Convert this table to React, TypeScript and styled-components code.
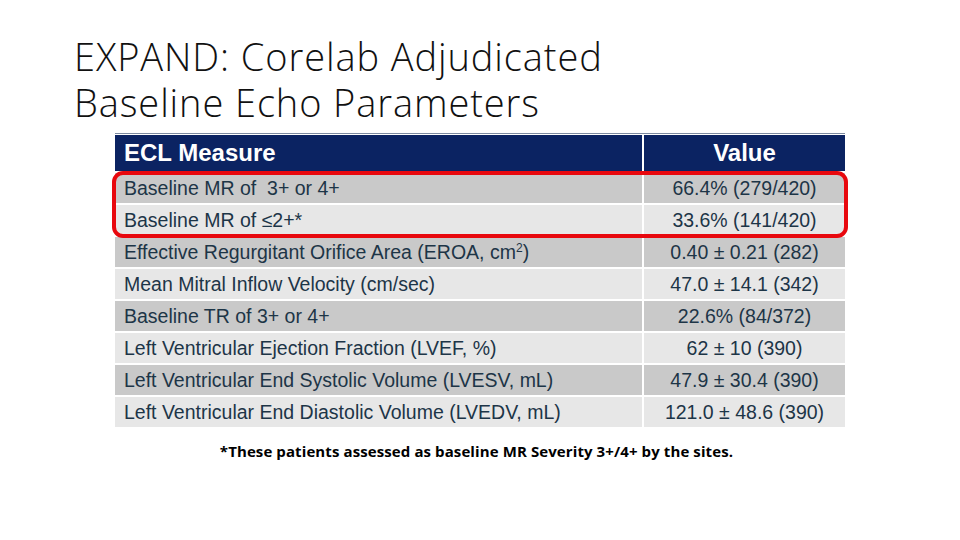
import React from "react"
import styled, { createGlobalStyle } from "styled-components"

const GlobalStyle = createGlobalStyle`
  html, body {
    margin: 0;
    padding: 0;
    background: #fff;
  }
`

const Slide = styled.div`
  width: 960px;
  height: 540px;
  overflow: hidden;
  display: flex;
  flex-direction: column;
  background: #fff;
`

const Title = styled.h1`
  margin: 33px 0 0 74px;
  font-family: "Open Sans", "Liberation Sans", sans-serif;
  font-weight: 300;
  font-size: 38px;
  line-height: 46px;
  color: #111;
  letter-spacing: 0.9px;
`

const TableWrap = styled.div`
  position: relative;
  margin: 8px 0 0 115px;
  width: 730px;
  border-top: 1px solid #7d8aa0;
  padding-top: 1px;
`

const Table = styled.div`
  display: grid;
  grid-template-columns: 527px 201px;
  grid-template-rows: 36px;
  grid-auto-rows: 30px;
  gap: 2px;
  font-family: "Liberation Sans", Arial, sans-serif;
`

const HeadCell = styled.div<{ $center?: boolean }>`
  background: #0b2362;
  color: #fff;
  font-weight: 700;
  font-size: 24px;
  display: flex;
  align-items: center;
  justify-content: ${(p) => (p.$center ? "center" : "flex-start")};
  padding-left: ${(p) => (p.$center ? "0" : "9px")};
`

const Cell = styled.div<{ $dark: boolean; $center?: boolean }>`
  background: ${(p) => (p.$dark ? "#c9c9c9" : "#e7e7e7")};
  color: #1d3547;
  font-size: 19.5px;
  display: flex;
  align-items: center;
  justify-content: ${(p) => (p.$center ? "center" : "flex-start")};
  padding-left: ${(p) => (p.$center ? "0" : "9px")};
  white-space: pre;
`

const Sup = styled.sup`
  font-size: 12px;
  margin-top: -9px;
`

const Highlight = styled.div`
  position: absolute;
  left: -3px;
  top: 37px;
  width: 736px;
  height: 67px;
  box-sizing: border-box;
  border: 4px solid #e8080e;
  border-radius: 11px;
  pointer-events: none;
`

const Footnote = styled.p`
  margin: 14px 0 0 0;
  width: 960px;
  padding-right: 7px;
  box-sizing: border-box;
  text-align: center;
  font-family: "Open Sans", "Liberation Sans", sans-serif;
  font-weight: 700;
  font-size: 15px;
  line-height: 20px;
  color: #000;
  letter-spacing: 0.1px;
`

const rows: [React.ReactNode, string][] = [
  ["Baseline MR of  3+ or 4+", "66.4% (279/420)"],
  ["Baseline MR of \u22642+*", "33.6% (141/420)"],
  [
    <>
      Effective Regurgitant Orifice Area (EROA, cm<Sup>2</Sup>)
    </>,
    "0.40 \u00b1 0.21 (282)",
  ],
  ["Mean Mitral Inflow Velocity (cm/sec)", "47.0 \u00b1 14.1 (342)"],
  ["Baseline TR of 3+ or 4+", "22.6% (84/372)"],
  ["Left Ventricular Ejection Fraction (LVEF, %)", "62 \u00b1 10 (390)"],
  ["Left Ventricular End Systolic Volume (LVESV, mL)", "47.9 \u00b1 30.4 (390)"],
  ["Left Ventricular End Diastolic Volume (LVEDV, mL)", "121.0 \u00b1 48.6 (390)"],
]

const App = () => (
  <Slide>
    <GlobalStyle />
    <Title>
      EXPAND: Corelab Adjudicated
      <br />
      Baseline Echo Parameters
    </Title>
    <TableWrap>
      <Table>
        <HeadCell>ECL Measure</HeadCell>
        <HeadCell $center>Value</HeadCell>
        {rows.map(([label, value], i) => (
          <React.Fragment key={i}>
            <Cell $dark={i % 2 === 0}>{label}</Cell>
            <Cell $dark={i % 2 === 0} $center>
              {value}
            </Cell>
          </React.Fragment>
        ))}
      </Table>
      <Highlight />
    </TableWrap>
    <Footnote>*These patients assessed as baseline MR Severity 3+/4+ by the sites.</Footnote>
  </Slide>
)

export default App
